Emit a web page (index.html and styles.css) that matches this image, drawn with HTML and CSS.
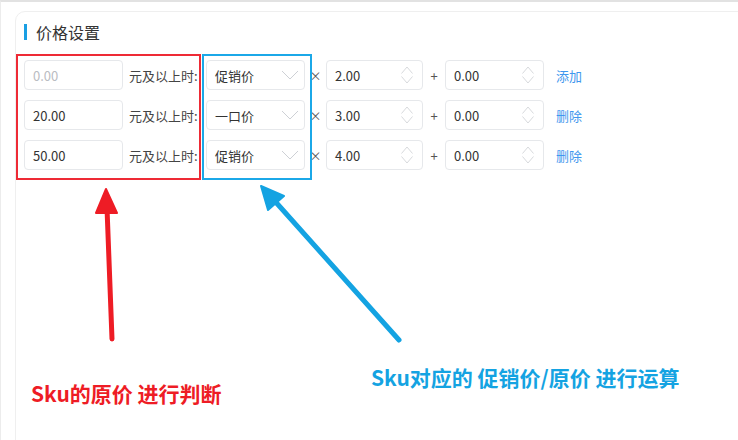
FILE: index.html
```html
<!DOCTYPE html>
<html lang="zh-CN">
<head>
<meta charset="utf-8">
<title>价格设置</title>
<link rel="stylesheet" href="styles.css">
</head>
<body>
<div class="page">
  <div class="card">
    <div class="title"><span class="bar"></span><span>价格设置</span></div>
    <div class="rows">
      <div class="row">
        <div class="input price placeholder">0.00</div>
        <div class="label">元及以上时:</div>
        <div class="input select"><span>促销价</span><svg class="chev" width="18" height="10" viewBox="0 0 18 10"><path d="M1 1 L9 9 L17 1" fill="none" stroke="#cdd0d5" stroke-width="1"/></svg></div>
        <div class="op">×</div>
        <div class="input num"><span>2.00</span><svg class="spin" width="14" height="22" viewBox="0 0 14 22"><path d="M1.5 9.5 L7 3 L12.5 9.5 M1.5 12.5 L7 19 L12.5 12.5" fill="none" stroke="#d8dadd" stroke-width="1"/></svg></div>
        <div class="op plus">+</div>
        <div class="input num"><span>0.00</span><svg class="spin" width="14" height="22" viewBox="0 0 14 22"><path d="M1.5 9.5 L7 3 L12.5 9.5 M1.5 12.5 L7 19 L12.5 12.5" fill="none" stroke="#d8dadd" stroke-width="1"/></svg></div>
        <a class="link">添加</a>
      </div>
      <div class="row">
        <div class="input price">20.00</div>
        <div class="label">元及以上时:</div>
        <div class="input select"><span>一口价</span><svg class="chev" width="18" height="10" viewBox="0 0 18 10"><path d="M1 1 L9 9 L17 1" fill="none" stroke="#cdd0d5" stroke-width="1"/></svg></div>
        <div class="op">×</div>
        <div class="input num"><span>3.00</span><svg class="spin" width="14" height="22" viewBox="0 0 14 22"><path d="M1.5 9.5 L7 3 L12.5 9.5 M1.5 12.5 L7 19 L12.5 12.5" fill="none" stroke="#d8dadd" stroke-width="1"/></svg></div>
        <div class="op plus">+</div>
        <div class="input num"><span>0.00</span><svg class="spin" width="14" height="22" viewBox="0 0 14 22"><path d="M1.5 9.5 L7 3 L12.5 9.5 M1.5 12.5 L7 19 L12.5 12.5" fill="none" stroke="#d8dadd" stroke-width="1"/></svg></div>
        <a class="link">删除</a>
      </div>
      <div class="row">
        <div class="input price">50.00</div>
        <div class="label">元及以上时:</div>
        <div class="input select"><span>促销价</span><svg class="chev" width="18" height="10" viewBox="0 0 18 10"><path d="M1 1 L9 9 L17 1" fill="none" stroke="#cdd0d5" stroke-width="1"/></svg></div>
        <div class="op">×</div>
        <div class="input num"><span>4.00</span><svg class="spin" width="14" height="22" viewBox="0 0 14 22"><path d="M1.5 9.5 L7 3 L12.5 9.5 M1.5 12.5 L7 19 L12.5 12.5" fill="none" stroke="#d8dadd" stroke-width="1"/></svg></div>
        <div class="op plus">+</div>
        <div class="input num"><span>0.00</span><svg class="spin" width="14" height="22" viewBox="0 0 14 22"><path d="M1.5 9.5 L7 3 L12.5 9.5 M1.5 12.5 L7 19 L12.5 12.5" fill="none" stroke="#d8dadd" stroke-width="1"/></svg></div>
        <a class="link">删除</a>
      </div>
    </div>
  </div>

  <div class="box box-red"></div>
  <div class="box box-blue"></div>
  <svg class="arrows" width="738" height="440" viewBox="0 0 738 440">
    <path d="M111 337 L106 206" stroke="#ee1c25" stroke-width="5" stroke-linecap="round" fill="none"/>
    <path d="M105 187 L116 211 L95 211 Z" fill="#ee1c25" stroke="#ee1c25" stroke-width="2" stroke-linejoin="round"/>
    <path d="M398 338 L272 197" stroke="#14a3e2" stroke-width="5" stroke-linecap="round" fill="none"/>
    <path d="M260 184 L283 194 L267 208 Z" fill="#14a3e2" stroke="#14a3e2" stroke-width="2" stroke-linejoin="round"/>
  </svg>
  <div class="note note-red">Sku的原价 进行判断</div>
  <div class="note note-blue">Sku对应的 促销价/原价 进行运算</div>
</div>
</body>
</html>
```

FILE: styles.css
```css
* { box-sizing: border-box; }
html, body { margin: 0; padding: 0; background: #ffffff; }
body {
  font-family: "Noto Sans CJK SC", "Noto Sans", sans-serif;
  color: #333333;
}
.page {
  position: relative;
  width: 738px;
  height: 440px;
  overflow: hidden;
  border-top: 2px solid #e2e2e2;
  border-left: 1px solid #ececec;
  padding: 9px 0 0 14px;
}
.card {
  width: 760px;
  height: 480px;
  border: 1px solid #efefef;
  border-radius: 10px 0 0 0;
  padding: 10px 0 0 8px;
}
.title {
  display: flex;
  align-items: center;
  gap: 9px;
  height: 20px;
  font-size: 16px;
  color: #333333;
}
.bar {
  width: 3px;
  height: 16px;
  background: #1a9fe3;
}
.rows {
  margin-top: 18px;
  display: flex;
  flex-direction: column;
  gap: 10px;
}
.row {
  display: flex;
  align-items: center;
  height: 30px;
  font-size: 13px;
}
.input {
  height: 30px;
  border: 1px solid #e6e8eb;
  border-radius: 4px;
  display: flex;
  align-items: center;
  justify-content: space-between;
  padding: 0 8px 0 8px;
  color: #333333;
  background: #fff;
}
.price { width: 99px; }
.placeholder { color: #b9bcc2; }
.label { margin-left: 6px; width: 70px; color: #444; }
.select { margin-left: 7px; width: 99px; padding-right: 5px; }
.chev { display: block; }
.op { width: 21px; text-align: center; font-size: 12px; color: #555; }
.plus { width: 22px; font-size: 13px; }
.num { width: 97px; padding-right: 8px; }
.row .num:last-of-type { width: 99px; }
.spin { display: block; }
.link {
  margin-left: 12px;
  color: #3f97ee;
  font-size: 13px;
}
.box {
  position: absolute;
  top: 52px;
  height: 126px;
  border: 2px solid;
}
.box-red { left: 15px; width: 185px; border-color: #ee2a35; }
.box-blue { left: 201px; width: 110px; border-color: #1ba8e8; }
.arrows { position: absolute; left: 0; top: 0; }
.note {
  position: absolute;
  font-weight: bold;
  white-space: nowrap;
  line-height: 1;
}
.note-red { left: 30px; top: 381px; font-size: 21px; color: #ee1c25; }
.note-blue { left: 370px; top: 365px; font-size: 21px; color: #14a3e2; }
```
